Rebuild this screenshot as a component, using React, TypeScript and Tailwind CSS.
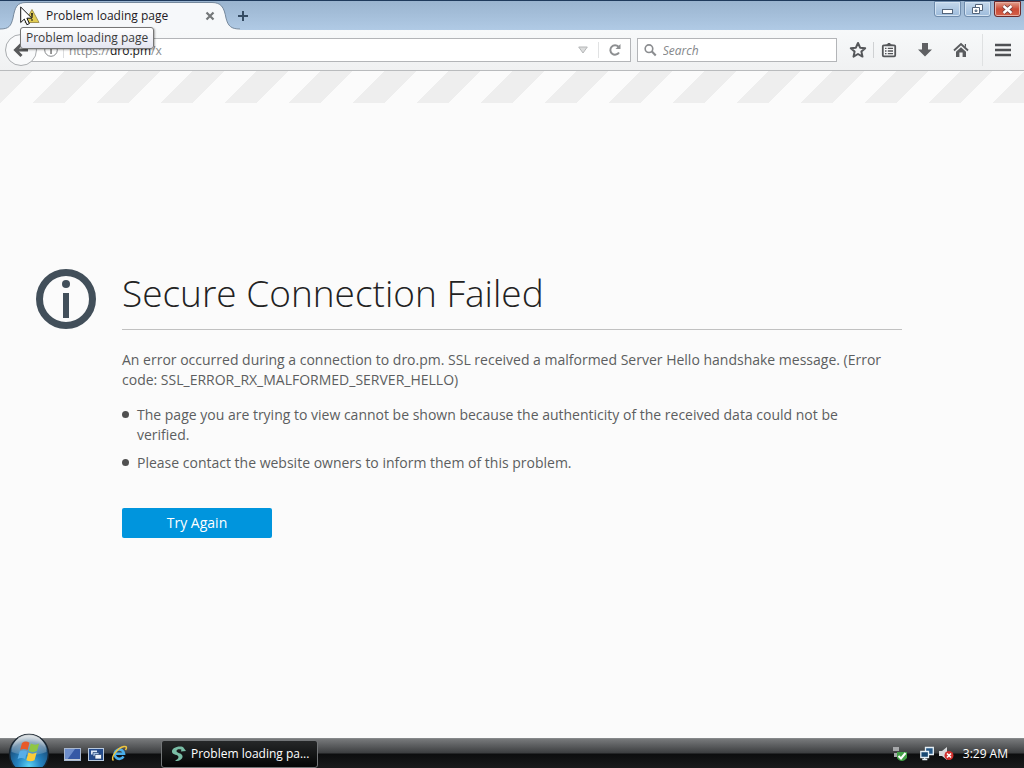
import React from "react";

const errorDetails = [
  "The page you are trying to view cannot be shown because the authenticity of the received data could not be verified.",
  "Please contact the website owners to inform them of this problem.",
];

const WindowControls = () => (
  <div className="flex items-start gap-[3px] pr-[3px]">
    <button
      aria-label="Minimize"
      className="flex h-4 w-[27px] items-center justify-center rounded-b-[3px] border border-[#6f8cad] bg-gradient-to-b from-[#c4d8ec] to-[#9dbbdb] shadow-[inset_0_0_0_1px_#d4e3f2]"
    >
      <svg width="13" height="13" viewBox="0 0 13 13">
        <rect x="1.5" y="6.5" width="10" height="4" fill="#fff" stroke="#53647a" />
      </svg>
    </button>
    <button
      aria-label="Restore"
      className="flex h-4 w-[27px] items-center justify-center rounded-b-[3px] border border-[#6f8cad] bg-gradient-to-b from-[#c4d8ec] to-[#9dbbdb] shadow-[inset_0_0_0_1px_#d4e3f2]"
    >
      <svg width="13" height="13" viewBox="0 0 13 13">
        <path d="M4.500 1.500h7v6h-7z" fill="#fff" stroke="#53647a" />
        <path d="M1.500 4.500h7v6h-7z" fill="#fff" stroke="#53647a" />
        <path d="M4 7h2v1.500H4z" fill="#9dbbdb" stroke="#53647a" strokeWidth=".8" />
      </svg>
    </button>
    <button
      aria-label="Close window"
      className="flex h-4 w-[27px] items-center justify-center rounded-b-[3px] border border-[#6a2a2c] bg-gradient-to-b from-[#e0a08f] via-[#cb4a35] to-[#d4614a] shadow-[inset_0_0_0_1px_#e8b0a4]"
    >
      <svg width="13" height="13" viewBox="0 0 13 13">
        <path d="M2.500 3l8 7M10.500 3l-8 7" stroke="#6b3a3c" strokeWidth="4" />
        <path d="M2.500 3l8 7M10.500 3l-8 7" stroke="#fff" strokeWidth="2.400" />
      </svg>
    </button>
  </div>
);

const WarningIcon = () => (
  <svg width="16" height="16" viewBox="0 0 16 16">
    <path d="M8 1.500L15 14.500H1z" fill="#e2cc52" stroke="#a39554" strokeLinejoin="round" />
    <path d="M7 5h2l-.4 5H7.400zM7.200 11.200h1.600v1.600H7.200z" fill="#37321c" />
  </svg>
);

const TabStrip = () => (
  <div className="flex h-[30px] justify-between border-t border-[#1f3a5c] bg-gradient-to-b from-[#9ab4cf] to-[#b0cae5]">
    <div className="flex">
      <div className="relative flex w-[230px] items-center pl-6">
        <svg className="absolute inset-0" width="240" height="29" viewBox="0 0 240 29">
          <path
            d="M0 28C9 28 11 25 13 17C15 6 17 1.500 26 1.500H212C221 1.500 224 6 226 17C228 25 231 28 240 28V29H0z"
            fill="#f6f8fa"
          />
          <path
            d="M0 28C9 28 11 25 13 17C15 6 17 1.500 26 1.500H212C221 1.500 224 6 226 17C228 25 231 28 240 28"
            fill="none"
            stroke="#76899d"
          />
        </svg>
        <div className="relative flex flex-1 items-center">
          <WarningIcon />
          <span className="ml-[6px] flex-1 text-xs text-[#241a24]">Problem loading page</span>
          <button aria-label="Close tab" className="mr-[15px]">
            <svg width="10" height="10" viewBox="0 0 10 10">
              <path d="M1.500 1.500l7 7M8.500 1.500l-7 7" stroke="#747779" strokeWidth="2.200" />
            </svg>
          </button>
        </div>
      </div>
      <button aria-label="Open a new tab" className="flex w-[26px] items-center justify-center">
        <svg width="12" height="12" viewBox="0 0 12 12">
          <path d="M6 1v10M1 6h10" stroke="#344b63" strokeWidth="2" />
        </svg>
      </button>
    </div>
    <WindowControls />
  </div>
);

const NavBar = () => (
  <div className="flex h-[41px] items-center border-b border-[#b9bbbd] bg-gradient-to-b from-[#f7f9fa] to-[#f0f1f2] pl-[5px] pr-px">
    <button
      aria-label="Back"
      className="z-10 flex size-8 shrink-0 items-center justify-center rounded-full border border-[#a9acaf] bg-[#f9fafb]"
    >
      <svg width="16" height="16" viewBox="0 0 16 16">
        <path d="M15 8H3M8.500 2L2.500 8l6 6" fill="none" stroke="#58595b" strokeWidth="3" />
      </svg>
    </button>
    <div className="-ml-3 mr-[6px] flex h-6 flex-1 items-center border border-[#b3b5b8] bg-white pl-[18px]">
      <svg width="14" height="14" viewBox="0 0 14 14">
        <circle cx="7" cy="7" r="6.300" fill="none" stroke="#86898c" />
        <path d="M6.300 3h1.500v1.500H6.300zM6.300 6h1.500v5H6.300z" fill="#777" />
      </svg>
      <span className="ml-[5px] h-4 w-px bg-[#dcdddf]" />
      <label className="relative ml-[5px] flex flex-1 pt-px text-xs text-[#8a8c8e]">
        <span aria-hidden="true">
          https://<span className="text-[#161616]">dro.pm</span>/x
        </span>
        <input
          aria-label="Address"
          defaultValue="https://dro.pm/x"
          className="absolute inset-0 w-full bg-transparent text-transparent outline-none"
        />
      </label>
      <button aria-label="Show history" className="px-[10px]">
        <svg width="10" height="8" viewBox="0 0 10 8">
          <path d="M.7 1h8.600L5 7z" fill="#dcdddd" stroke="#b5b7b8" />
        </svg>
      </button>
      <button aria-label="Reload" className="flex h-4 w-8 items-center justify-center border-l border-[#e1e2e3]">
        <svg width="14" height="14" viewBox="0 0 14 14">
          <path d="M11 9.500A4.700 4.700 0 1 1 10.500 3.800" fill="none" stroke="#8d8f91" strokeWidth="2" />
          <path d="M12.500 1v5H7.500z" fill="#8d8f91" />
        </svg>
      </button>
    </div>
    <label className="mr-[6px] flex h-6 w-[200px] items-center border border-[#b3b5b8] bg-white pl-[6px]">
      <svg width="14" height="14" viewBox="0 0 14 14">
        <circle cx="5.500" cy="5.500" r="4.200" fill="none" stroke="#8b8d90" strokeWidth="1.800" />
        <path d="M8.500 8.500l4.500 4.500" stroke="#8b8d90" strokeWidth="2.400" />
      </svg>
      <input
        aria-label="Search"
        placeholder="Search"
        className="ml-[6px] w-full bg-transparent pt-px text-xs outline-none placeholder:italic placeholder:text-[#85878a]"
      />
    </label>
    <button aria-label="Bookmark this page" className="flex w-[30px] justify-center">
      <svg width="18" height="18" viewBox="0 0 18 18">
        <path
          d="M9 2l2.100 4.700 5.100.5-3.800 3.400 1.100 5L9 13l-4.500 2.600 1.100-5L1.800 7.200l5.100-.5z"
          fill="none"
          stroke="#55575a"
          strokeWidth="2"
          strokeLinejoin="round"
        />
      </svg>
    </button>
    <span className="h-4 w-px bg-[#cfd1d3]" />
    <button aria-label="Show bookmarks" className="mr-[3px] flex w-[30px] justify-center">
      <svg width="16" height="16" viewBox="0 0 16 16">
        <rect x="1.800" y="3.300" width="12.400" height="11" rx="1" fill="#f6f7f8" stroke="#55575a" strokeWidth="1.800" />
        <path d="M4.500 4V2.500H6L7 1h2l1 1.500h1.500V4z" fill="#55575a" />
        <path d="M4 6.300h1.500M6.800 6.300H12M4 9h1.500M6.800 9H12M4 11.700h1.500M6.800 11.700H12" stroke="#55575a" strokeWidth="1.300" />
      </svg>
    </button>
    <button aria-label="Downloads" className="flex w-9 justify-center">
      <svg width="16" height="16" viewBox="0 0 16 16">
        <path d="M5 1h6v6.500h4L8 14.500 1 7.500h4z" fill="#5f6063" />
      </svg>
    </button>
    <button aria-label="Home" className="flex w-9 justify-center">
      <svg width="16" height="16" viewBox="0 0 16 16">
        <path d="M1 8.500l7-6.500 7 6.500" fill="none" stroke="#5a5c5f" strokeWidth="1.900" />
        <path d="M11.800 2H13v3.500l-1.200-1.200zM3 9.800L8 5.200l5 4.600V15H9.600v-4.500H6.400V15H3z" fill="#5a5c5f" />
      </svg>
    </button>
    <span className="ml-[3px] h-8 w-px bg-[#dfe1e2]" />
    <button aria-label="Open menu" className="flex w-10 justify-center">
      <svg width="16" height="14" viewBox="0 0 16 14">
        <path d="M0 2h16M0 7h16M0 12h16" stroke="#4f5154" strokeWidth="2.600" />
      </svg>
    </button>
  </div>
);

const ErrorPage = () => (
  <main className="flex flex-1 flex-col bg-[#fbfbfb]">
    <div className="h-8 bg-[linear-gradient(-45deg,#eee,#eee_33%,#fbfbfb_33%,#fbfbfb_66%,#eee_66%,#eee)] bg-[length:64px_32px]" />
    <div className="mx-auto flex w-full max-w-[780px] flex-1 items-center pb-[34px]">
      <div className="flex w-full items-start">
        <svg className="-ml-[86px] mr-[26px] shrink-0" width="60" height="60" viewBox="0 0 60 60">
          <circle cx="30" cy="30" r="26.500" fill="none" stroke="#424f5a" strokeWidth="7" />
          <circle cx="30" cy="15" r="4" fill="#424f5a" />
          <path d="M27 24h6v25h-6z" fill="#424f5a" />
        </svg>
        <div className="flex-1">
          <h1 className="border-b border-[#c1c1c1] pb-3 text-[37px] font-light leading-[48px] text-[#222]">
            Secure Connection Failed
          </h1>
          <p className="mt-5 text-sm leading-5 text-[#5c5e60]">
            An error occurred during a connection to dro.pm. SSL received a malformed Server Hello handshake message.
            (Error code: SSL_ERROR_RX_MALFORMED_SERVER_HELLO)
          </p>
          <ul className="mt-[15px] space-y-2 pr-8 text-sm leading-5 text-[#5c5e60]">
            {errorDetails.map((detail) => (
              <li key={detail} className="flex">
                <span className="mr-2 mt-[6px] size-[7px] shrink-0 rounded-full bg-[#505050]" />
                <span>{detail}</span>
              </li>
            ))}
          </ul>
          <button className="mt-[35px] h-[30px] w-[150px] rounded-[2px] bg-[#0095dd] text-sm text-white">
            Try Again
          </button>
        </div>
      </div>
    </div>
  </main>
);

const StartOrb = () => (
  <svg width="42" height="42" viewBox="0 0 42 42">
    <defs>
      <radialGradient id="orb" cx="50%" cy="80%" r="75%">
        <stop offset="0" stopColor="#5bd3f5" />
        <stop offset=".4" stopColor="#2482c0" />
        <stop offset=".8" stopColor="#1b527f" />
        <stop offset="1" stopColor="#8799a6" />
      </radialGradient>
      <linearGradient id="gloss" x1="0" y1="0" x2="0" y2="1">
        <stop offset="0" stopColor="#fff" stopOpacity=".75" />
        <stop offset="1" stopColor="#fff" stopOpacity=".15" />
      </linearGradient>
    </defs>
    <circle cx="21" cy="21" r="19.500" fill="url(#orb)" stroke="#18242f" strokeWidth="1.500" />
    <path d="M3.500 19a17.500 17.500 0 0 1 35 0c-9 4-25 4-35 0z" fill="url(#gloss)" />
    <path d="M14 10c2.500-1.800 4.800-1.800 7.500-.3L19.600 17c-2.600-1.500-4.900-1.500-7.500 0z" fill="#e8592a" />
    <path d="M22.800 10.500c3 1.500 5.600 1.500 8.400 0L29 18c-2.700 1.500-5.300 1.500-8.200 0z" fill="#8fc643" />
    <path d="M11.600 18.600c2.700-1.500 5-1.500 7.500 0l-2 7.400c-2.600-1.500-4.900-1.500-7.500 0z" fill="#58aee8" />
    <path d="M20.400 19.500c2.900 1.500 5.500 1.500 8.300 0l-2.200 7.700c-2.700 1.500-5.300 1.500-8.200 0z" fill="#fbcb3a" />
  </svg>
);

const Taskbar = () => (
  <footer className="flex h-[30px] items-center border-t border-[#85888a] bg-[linear-gradient(#77797b,#3c3e40_48%,#0c0d0e_52%,#1a1b1c)] text-xs text-white">
    <button aria-label="Start" className="-mb-1 -mt-3 ml-2 h-[34px] overflow-hidden">
      <StartOrb />
    </button>
    <div className="ml-[14px] flex items-center gap-[7px]">
      <button aria-label="Show desktop">
        <svg width="17" height="16" viewBox="0 0 17 16">
          <rect x=".5" y="2.500" width="16" height="12" fill="#3659a5" stroke="#a9b8cf" />
          <path d="M1 3h10L3 14H1z" fill="#86a5dc" opacity=".7" />
          <path d="M1 13.500h15" stroke="#c3cbd6" />
        </svg>
      </button>
      <button aria-label="Switch between windows">
        <svg width="16" height="16" viewBox="0 0 16 16">
          <rect x=".5" y="2.500" width="15" height="12" fill="#244b8c" stroke="#b9c9dd" />
          <path d="M3 4.500h6v4H3z" fill="#dfe9f5" />
          <path d="M5 6.500h6v4H5z" fill="#a8c4e6" stroke="#23416f" strokeWidth=".7" />
          <path d="M7 8.500h6.500V13H7z" fill="#f0f5fa" stroke="#23416f" strokeWidth=".7" />
        </svg>
      </button>
      <button aria-label="Internet Explorer">
        <svg width="17" height="17" viewBox="0 0 17 17">
          <path d="M12.500 11.300A4.700 4.700 0 1 1 13 8.700H5" fill="none" stroke="#4aaeea" strokeWidth="2.600" />
          <path d="M2.500 15.500C-1 13 6 3 13 1.500c3-.5 3 1.500 1.500 3.500" fill="none" stroke="#f0c63e" strokeWidth="1.500" />
        </svg>
      </button>
    </div>
    <button className="ml-[33px] flex h-7 w-[157px] items-center rounded-[3px] border border-[#737678] bg-gradient-to-b from-[#262829] to-[#050606] pl-2">
      <svg width="17" height="17" viewBox="0 0 17 17">
        <path
          d="M16 6l-3-4C8 .5 1.500 3 2 7c.4 3 6.500 2.500 6.500 5 0 1.800-2 2.600-3.500 4 4.500.3 8-2 7.500-5-.5-3.200-6-2.700-6-5 0-1.800 3-2 5-1.200L10.800 6.500z"
          fill="#79bda5"
        />
      </svg>
      <span className="ml-1">Problem loading pa...</span>
    </button>
    <div className="ml-auto flex items-center pr-4">
      <svg className="mr-3" width="16" height="16" viewBox="0 0 16 16">
        <path d="M1 1h6v4H1zM2 7h6v4H2z" fill="#a6a8aa" />
        <path d="M5 6h10v6c-2 2-3 3-5 3s-4-1-5-3z" fill="#43a047" />
        <path d="M6.500 10l2.500 2.500L13.500 7" fill="none" stroke="#fff" strokeWidth="2" />
      </svg>
      <svg className="mr-[5px]" width="14" height="16" viewBox="0 0 14 16">
        <path d="M5.500 1.500h7.800v7H5.500z" fill="#255887" stroke="#e6f0f6" strokeWidth="1.300" />
        <path d="M.8 5.500h7.700v6H.8zM2.300 13.500h5M4.700 11.500v2" fill="#174873" stroke="#e6f0f6" strokeWidth="1.300" />
      </svg>
      <svg className="mr-[9px]" width="15" height="15" viewBox="0 0 15 15">
        <path d="M0 5h3l5-4v13L3 10H0z" fill="#d7d9db" />
        <circle cx="10" cy="9.500" r="4.500" fill="#d1302d" />
        <path d="M8 7.500l4 4M12 7.500l-4 4" stroke="#fff" strokeWidth="1.600" />
      </svg>
      <time>3:29 AM</time>
    </div>
  </footer>
);

const App = () => {
  return (
    <div className="relative flex min-h-screen flex-col font-['Open_Sans','Noto_Sans',sans-serif]">
      <TabStrip />
      <NavBar />
      <ErrorPage />
      <Taskbar />

      <div
        role="tooltip"
        className="absolute left-5 top-[27px] z-20 flex h-[22px] items-center rounded-[3px] border border-[#767676] bg-gradient-to-b from-white to-[#e4e5f0] px-[5px] text-xs text-[#3b3b3b] shadow-[1px_1px_2px_#0005]"
      >
        Problem loading page
      </div>
      <svg className="absolute left-5 top-[6px] z-30" width="13" height="20" viewBox="0 0 13 20">
        <path d="M.7 1v15.500l3.600-3.400 2.600 5.600 2.500-1.100-2.500-5.400h5z" fill="#fff" stroke="#111" />
      </svg>
    </div>
  );
};

export default App;
